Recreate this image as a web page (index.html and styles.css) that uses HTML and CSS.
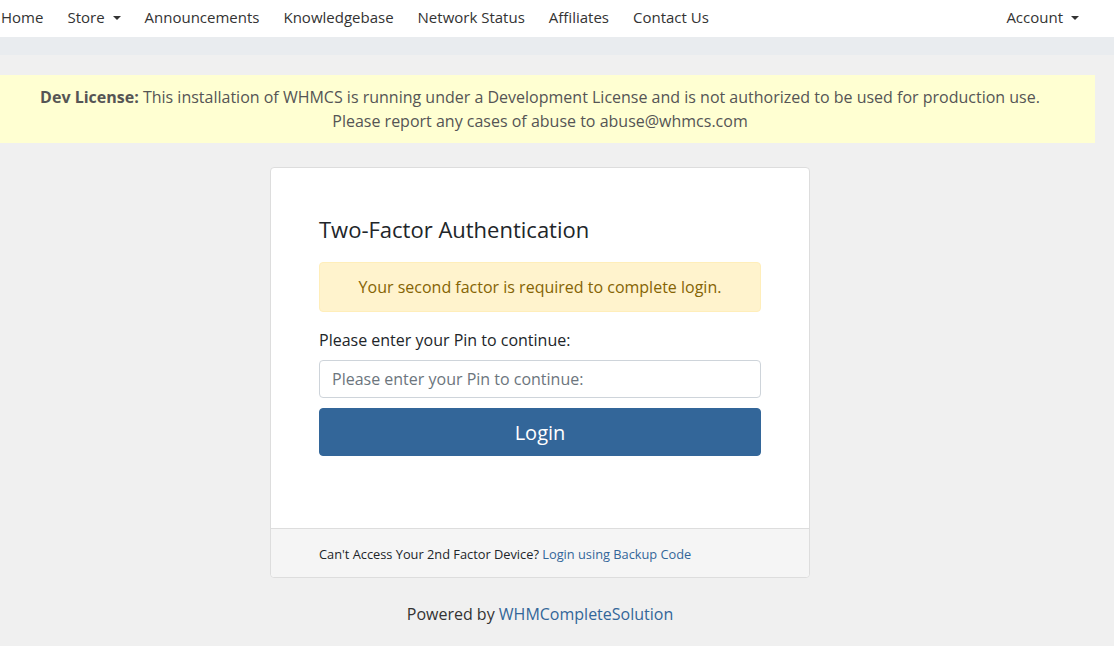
FILE: index.html
```html
<!DOCTYPE html>
<html lang="en">
<head>
  <meta charset="UTF-8" />
  <title>Two-Factor Authentication</title>
  <link rel="stylesheet" href="styles.css">
</head>
<body>
  <nav class="topnav">
    <ul class="nav-left">
      <li><a href="#">Home</a></li>
      <li><a href="#" class="dropdown">Store</a></li>
      <li><a href="#">Announcements</a></li>
      <li><a href="#">Knowledgebase</a></li>
      <li><a href="#">Network Status</a></li>
      <li><a href="#">Affiliates</a></li>
      <li><a href="#">Contact Us</a></li>
    </ul>
    <ul class="nav-right">
      <li><a href="#" class="dropdown">Account</a></li>
    </ul>
  </nav>
  <div class="breadcrumb-strip"></div>

  <div class="dev-license">
    <strong>Dev License:</strong> This installation of WHMCS is running under a Development License and is not authorized to be used for production use.<br>
    Please report any cases of abuse to abuse@whmcs.com
  </div>

  <div class="page">
    <main class="login-wrap">
      <div class="card">
        <div class="card-body">
          <h2>Two-Factor Authentication</h2>
          <div class="alert">Your second factor is required to complete login.</div>
          <label for="pin">Please enter your Pin to continue:</label>
          <input id="pin" type="text" placeholder="Please enter your Pin to continue:">
          <button class="btn-login">Login</button>
        </div>
        <div class="card-footer">
          Can't Access Your 2nd Factor Device? <a href="#">Login using Backup Code</a>
        </div>
      </div>
      <p class="powered">Powered by <a href="#">WHMCompleteSolution</a></p>
    </main>
  </div>
</body>
</html>
```

FILE: styles.css
```css
/* ── BASE ─────────────────────────────────────────────── */
* { margin: 0; padding: 0; box-sizing: border-box; }
body {
  font-family: 'Open Sans', 'Noto Sans', sans-serif;
  background: #f0f0f0;
  color: #212529;
  font-size: 16px;
}
a { color: #336699; text-decoration: none; }

/* ── TOP NAV ──────────────────────────────────────────── */
.topnav {
  background: #fff;
  height: 37px;
  display: flex;
  justify-content: space-between;
  align-items: center;
  padding: 0 35px 4px 1px;
}
.topnav ul {
  list-style: none;
  display: flex;
  gap: 24px;
}
.topnav a {
  color: #333;
  font-size: 15px;
}
.topnav a.dropdown::after {
  content: "";
  display: inline-block;
  margin-left: 8px;
  vertical-align: 3px;
  border-top: 4px solid #333;
  border-left: 4px solid transparent;
  border-right: 4px solid transparent;
}
.breadcrumb-strip {
  background: #e9ecef;
  height: 18px;
}

/* ── DEV LICENSE BANNER ───────────────────────────────── */
.dev-license {
  margin: 20px 19px 0 0;
  background: #ffffd2;
  color: #555;
  text-align: center;
  font-size: 16px;
  line-height: 24px;
  padding: 10px 15px 10px 0;
}

/* ── LOGIN CARD ───────────────────────────────────────── */
.page { width: 1080px; }
.login-wrap {
  width: 540px;
  margin: 24px auto 0;
}
.card {
  background: #fff;
  border: 1px solid #ddd;
  border-radius: 4px;
}
.card-body {
  padding: 43px 48px 72px;
  display: flex;
  flex-direction: column;
}
.card-body h2 {
  font-size: 22px;
  font-weight: 400;
  line-height: 36px;
  margin-bottom: 15px;
}
.alert {
  background: #fff3cd;
  border: 1px solid #ffeeba;
  color: #856404;
  border-radius: 4px;
  text-align: center;
  padding: 12px;
  line-height: 24px;
  margin-bottom: 16px;
}
.card-body label {
  line-height: 24px;
  margin-bottom: 8px;
}
.card-body input {
  font-family: inherit;
  font-size: 16px;
  height: 38px;
  padding: 6px 12px;
  border: 1px solid #ced4da;
  border-radius: 4px;
  color: #495057;
}
.card-body input::placeholder { color: #6c757d; }
.btn-login {
  margin-top: 10px;
  height: 48px;
  background: #336699;
  color: #fff;
  border: 1px solid #336699;
  border-radius: 4px;
  font-family: inherit;
  font-size: 20px;
  cursor: pointer;
}
.card-footer {
  background: #f5f5f5;
  border-top: 1px solid #ddd;
  font-size: 12.8px;
  padding: 15px 48px 13px;
  line-height: 20px;
  border-radius: 0 0 4px 4px;
}

/* ── FOOTER ───────────────────────────────────────────── */
.powered {
  text-align: center;
  margin-top: 24px;
  color: #333;
  line-height: 24px;
}
```
